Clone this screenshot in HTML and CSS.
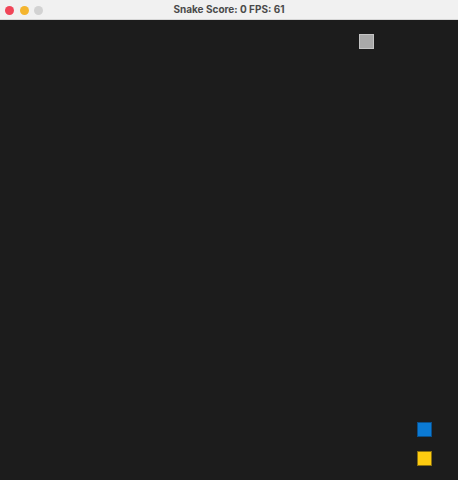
FILE: index.html
```html
<!DOCTYPE html>
<html>
<head>
<meta charset="utf-8">
<link rel="stylesheet" href="styles.css">
</head>
<body>
<div class="window">
  <div class="titlebar">
    <div class="lights">
      <span class="light red"></span>
      <span class="light yellow"></span>
      <span class="light gray"></span>
    </div>
    <div class="title">Snake Score: 0 FPS: 61</div>
  </div>
  <div class="board">
    <div class="cell food" style="left:359px;top:14px"></div>
    <div class="cell head" style="left:417px;top:402px"></div>
    <div class="cell tail" style="left:417px;top:431px"></div>
  </div>
</div>
</body>
</html>
```
FILE: styles.css
```css
html, body {
  margin: 0;
  padding: 0;
  width: 458px;
  height: 480px;
  overflow: hidden;
  background: #1c1c1c;
}
.window {
  display: flex;
  flex-direction: column;
  width: 458px;
  height: 480px;
}
.titlebar {
  position: relative;
  height: 19px;
  flex: 0 0 19px;
  background: #f1f1f1;
  border-bottom: 1px solid #d6d6d6;
  display: flex;
  align-items: center;
  justify-content: center;
}
.lights {
  position: absolute;
  left: 5px;
  top: 5.5px;
  display: flex;
  gap: 5.5px;
}
.light {
  width: 9px;
  height: 9px;
  border-radius: 50%;
  display: block;
}
.light.red { background: #f04558; }
.light.yellow { background: #f4b52f; }
.light.gray { background: #d2d2d2; }
.title {
  font-family: "Inter", "Liberation Sans", sans-serif;
  font-weight: 700;
  font-size: 10px;
  color: #4a4a4a;
  line-height: 19px;
}
.board {
  position: relative;
  flex: 1;
  background: #1c1c1c;
}
.cell {
  position: absolute;
  width: 15px;
  height: 15px;
  box-sizing: border-box;
}
.food {
  background: #a9a9a9;
  border: 1px solid #c4c4c4;
}
.head {
  background: #0b7ad4;
  border: 1px solid #0a4f8a;
}
.tail {
  background: #fdcb10;
  border: 1px solid #8a7010;
}
```
